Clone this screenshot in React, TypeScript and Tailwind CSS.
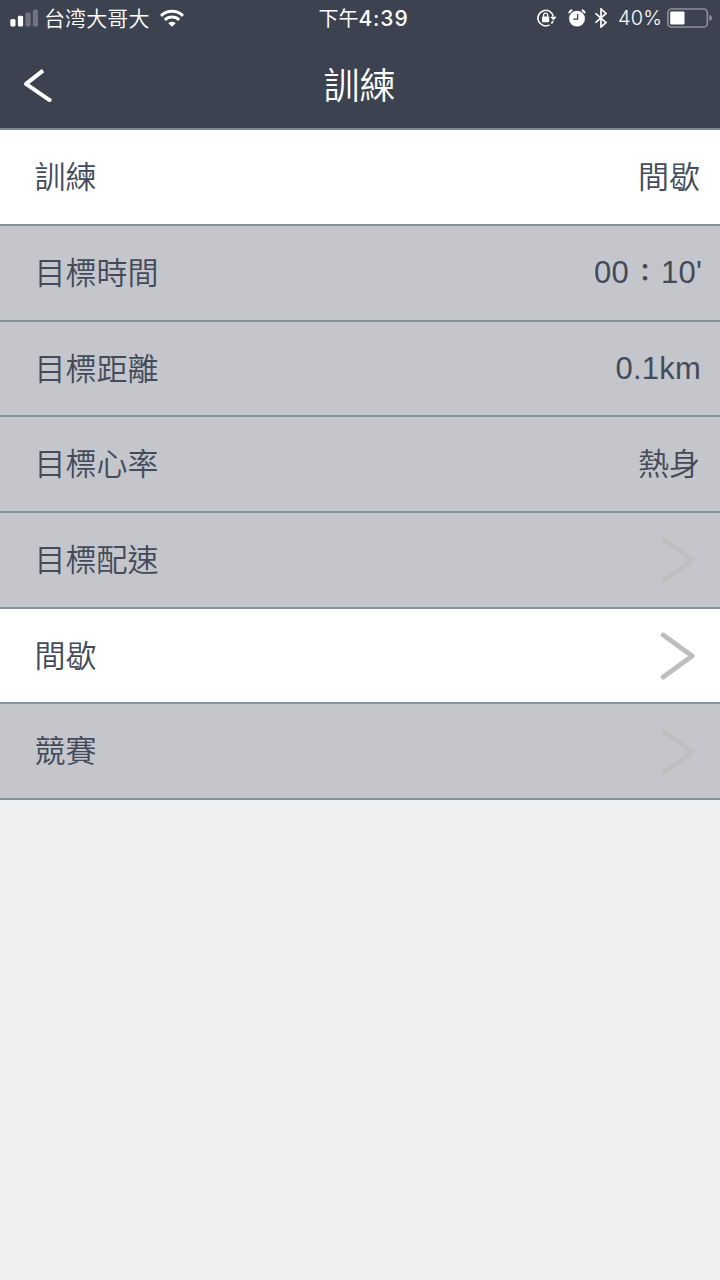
import React from 'react';

type Row = {
  label: string;
  value?: React.ReactNode;
  enabled?: boolean;
};

const rows: Row[] = [
  { label: '訓練', value: '間歇', enabled: true },
  {
    label: '目標時間',
    value: (
      <span className="flex items-center -mr-0.5 tracking-[0.2px]">
        00<span className="w-[32px] text-center text-[24px] font-bold">：</span>10'
      </span>
    ),
  },
  { label: '目標距離', value: <span className="-mr-px tracking-[0.2px]">0.1km</span> },
  { label: '目標心率', value: '熱身' },
  { label: '目標配速' },
  { label: '間歇', enabled: true },
  { label: '競賽' },
];

function SignalIcon() {
  return (
    <svg className="w-7 h-[18px]" viewBox="0 0 28 18" fill="#fff">
      <rect x="0.3" y="10" width="5.2" height="7.5" rx="1.5" />
      <rect x="7.9" y="6.8" width="5.2" height="10.7" rx="1.5" />
      <rect x="15.5" y="3.6" width="5.2" height="13.9" rx="1.5" fill="#6f7480" />
      <rect x="22.9" y="0.4" width="5.1" height="17.1" rx="1.5" fill="#6f7480" />
    </svg>
  );
}

function WifiIcon() {
  return (
    <svg className="w-6 h-[18px]" viewBox="0 0 24 18" fill="none" stroke="#fff" strokeWidth="3">
      <path d="M1 6.8A15.8 15.8 0 0 1 23 6.8" />
      <path d="M4.8 10.8A10.5 10.5 0 0 1 19.2 10.8" />
      <path d="M8.3 14.2A5.4 5.4 0 0 1 15.7 14.2L12 17.8Z" fill="#fff" stroke="none" />
    </svg>
  );
}

function RotationLockIcon() {
  return (
    <svg className="w-5 h-[18px]" viewBox="0 0 20 18" fill="none" stroke="#fff" strokeWidth="1.6">
      <path d="M16.4 7.6A7.8 7.8 0 1 0 12.6 15.9" />
      <path d="M13.2 7.8H19.6L16.4 11.6Z" fill="#fff" stroke="none" />
      <path d="M15.9 12A7.8 7.8 0 0 1 14.4 14.5" />
      <rect x="5" y="7.5" width="7.2" height="5.7" rx="0.7" fill="#fff" stroke="none" />
      <path d="M6.6 8V6.2a2 2 0 0 1 4 0V8" strokeWidth="1.3" />
    </svg>
  );
}

function AlarmIcon() {
  return (
    <svg className="w-[18px] h-[18px]" viewBox="0 0 18 18" fill="none">
      <circle cx="9" cy="9.7" r="7.9" fill="#fff" />
      <path d="M9.6 5V10.2H5.2" stroke="#3c4250" strokeWidth="1.3" />
      <path d="M1 4.2Q1.8 1.8 4.2 1M17 4.2Q16.2 1.8 13.8 1" stroke="#fff" strokeWidth="2" />
    </svg>
  );
}

function BluetoothIcon() {
  return (
    <svg className="w-3 h-5" viewBox="0 0 12 20" fill="none" stroke="#fff" strokeWidth="1.7">
      <path d="M0.5 5.3L11 14.6L6 19V1L11 5.4L0.5 14.7" />
    </svg>
  );
}

function BatteryIcon() {
  return (
    <svg className="w-[45px] h-5" viewBox="0 0 45 20" fill="none">
      <rect x="0.9" y="1" width="39.4" height="18" rx="3.6" stroke="#8d919a" strokeWidth="1.6" />
      <rect x="3.2" y="3.5" width="14.3" height="13" rx="1" fill="#fff" />
      <path d="M42.3 6.8Q45 7.7 45 10T42.3 13.2Z" fill="#8d919a" />
    </svg>
  );
}

function StatusBar() {
  return (
    <div className="h-[35px] grid grid-cols-[1fr_auto_1fr] items-center pl-[10px] pr-[8px] text-[20px] leading-none">
      <div className="flex items-center">
        <SignalIcon />
        <span className="ml-[6px] -mt-px text-[21px] tracking-[0.1px] font-[350]">台湾大哥大</span>
        <span className="ml-[10px]">
          <WifiIcon />
        </span>
      </div>
      <div className="flex items-center pl-[5px]">
        <span className="text-[20px]">下午</span>
        <span className="mt-0.5 font-['Inter'] font-medium text-[21px] tracking-[0.9px]">4:39</span>
      </div>
      <div className="flex items-center justify-end">
        <RotationLockIcon />
        <span className="ml-[11px]">
          <AlarmIcon />
        </span>
        <span className="ml-[9px]">
          <BluetoothIcon />
        </span>
        <span className="ml-[11px] mt-px font-['Inter'] font-light tracking-[0.1px]">40%</span>
        <span className="ml-[5px]">
          <BatteryIcon />
        </span>
      </div>
    </div>
  );
}

function Chevron({ enabled }: { enabled?: boolean }) {
  return (
    <svg
      className={enabled ? 'w-9 h-12 mr-1 mt-px text-[#bebebe]' : 'w-9 h-12 mr-1 mt-px text-[#bebfbf]'}
      viewBox="0 0 36 48"
      fill="none"
      stroke="currentColor"
      strokeWidth="4.8"
      strokeLinecap="round"
      strokeLinejoin="round"
    >
      <path d="M3.2 3L32.2 24L3.2 45" />
    </svg>
  );
}

function App() {
  return (
    <div className="h-screen w-full flex flex-col overflow-hidden bg-[#eeeff1] text-[#434b5b] font-['Noto_Sans_CJK_TC','Noto_Sans_CJK_SC',sans-serif]">
      <header className="h-[130.4px] shrink-0 bg-[#3c4250] text-white border-b-2 border-[#7b8898]">
        <StatusBar />
        <div className="h-[93px] grid grid-cols-[1fr_auto_1fr] items-center pl-[22px] pr-[22px]">
          <svg className="w-[31px] h-[34px] mt-2" viewBox="0 0 31 34" fill="none" stroke="#fff" strokeWidth="4" strokeLinejoin="round">
            <path d="M21 1.7L4 14.9L27.5 31.2" />
            <circle cx="27.7" cy="31.1" r="2" fill="#fff" stroke="none" />
          </svg>
          <h1 className="text-[36px] leading-none font-[350] mt-0.5 -ml-px">訓練</h1>
        </div>
      </header>

      <main>
        {rows.map((row) => (
          <div
            key={row.label}
            className={`h-[95.67px] flex items-center justify-between pl-[34.5px] pr-5 border-b-2 border-[#8391a0] text-[31px] leading-none font-[350] ${
              row.enabled ? 'bg-white' : 'bg-[#c5c6cb]'
            }`}
          >
            <span className="-mt-[5px]">{row.label}</span>
            {row.value ? (
              <span className="font-['Liberation_Sans','Noto_Sans_CJK_TC',sans-serif]">{row.value}</span>
            ) : (
              <Chevron enabled={row.enabled} />
            )}
          </div>
        ))}
      </main>
    </div>
  );
}

export default App;
